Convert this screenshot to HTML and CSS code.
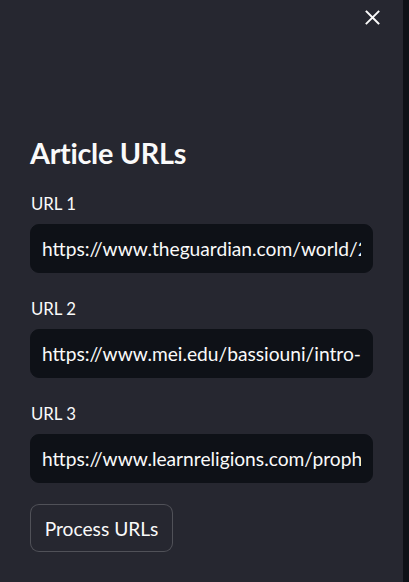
FILE: index.html
```html
<!DOCTYPE html>
<html>
<head>
<meta charset="utf-8">
<link rel="stylesheet" href="styles.css">
</head>
<body>
<div class="app">
  <aside class="sidebar">
    <div class="topbar">
      <button class="close" aria-label="Close sidebar">
        <svg width="15" height="15" viewBox="0 0 15 15"><path d="M1.5 1.5 L13.5 13.5 M13.5 1.5 L1.5 13.5" stroke="#fafafa" stroke-width="1.9" fill="none" stroke-linecap="square"/></svg>
      </button>
    </div>
    <div class="content">
      <h1 class="title">Article URLs</h1>
      <div class="field">
        <label class="label" for="u1">URL 1</label>
        <input class="input" id="u1" type="text" value="https://www.theguardian.com/world/2023/oct/09/israel-gaza-conflict">
      </div>
      <div class="field">
        <label class="label" for="u2">URL 2</label>
        <input class="input" id="u2" type="text" value="https://www.mei.edu/bassiouni/intro-to-the-conflict">
      </div>
      <div class="field">
        <label class="label" for="u3">URL 3</label>
        <input class="input" id="u3" type="text" value="https://www.learnreligions.com/prophet-muhammad">
      </div>
      <button class="btn">Process URLs</button>
    </div>
  </aside>
  <main class="main"></main>
</div>
</body>
</html>
```
FILE: styles.css
```css
html, body {
  margin: 0;
  padding: 0;
  background: #0e1117;
  height: 100%;
}
body {
  font-family: Lato, "Open Sans", sans-serif;
  color: #fafafa;
}
.app {
  display: flex;
  height: 582px;
}
.sidebar {
  width: 403px;
  flex: none;
  background: #262730;
  display: flex;
  flex-direction: column;
}
.main {
  flex: 1;
  background: #0e1117;
}
.topbar {
  display: flex;
  justify-content: flex-end;
  padding: 10px 23px 0 0;
  height: 40px;
  box-sizing: border-box;
}
.close {
  background: none;
  border: 0;
  padding: 0;
  width: 15px;
  height: 15px;
  display: block;
}
.close svg { display: block; }
.content {
  padding: 93px 30px 0 30px;
  display: flex;
  flex-direction: column;
}
.title {
  margin: 0;
  font-size: 28.8px;
  font-weight: 700;
  line-height: 40px;
  letter-spacing: -0.3px;
}
.field {
  display: flex;
  flex-direction: column;
  margin-top: 20px;
}
.label {
  font-size: 16.8px;
  line-height: 22px;
  margin-bottom: 9px;
  padding-left: 1px;
}
.input {
  height: 49px;
  box-sizing: border-box;
  background: #0e1117;
  border: 1px solid #0e1117;
  border-radius: 9px;
  color: #fafafa;
  font-family: inherit;
  font-size: 19.2px;
  padding: 0 11px;
  outline: none;
}
.field + .field { margin-top: 25px; }
.btn {
  align-self: flex-start;
  margin-top: 21px;
  height: 48px;
  width: 143px;
  background: #262730;
  border: 1px solid rgba(250, 250, 250, 0.2);
  border-radius: 9px;
  color: #fafafa;
  font-family: inherit;
  font-size: 19.2px;
  padding: 0;
}
```
